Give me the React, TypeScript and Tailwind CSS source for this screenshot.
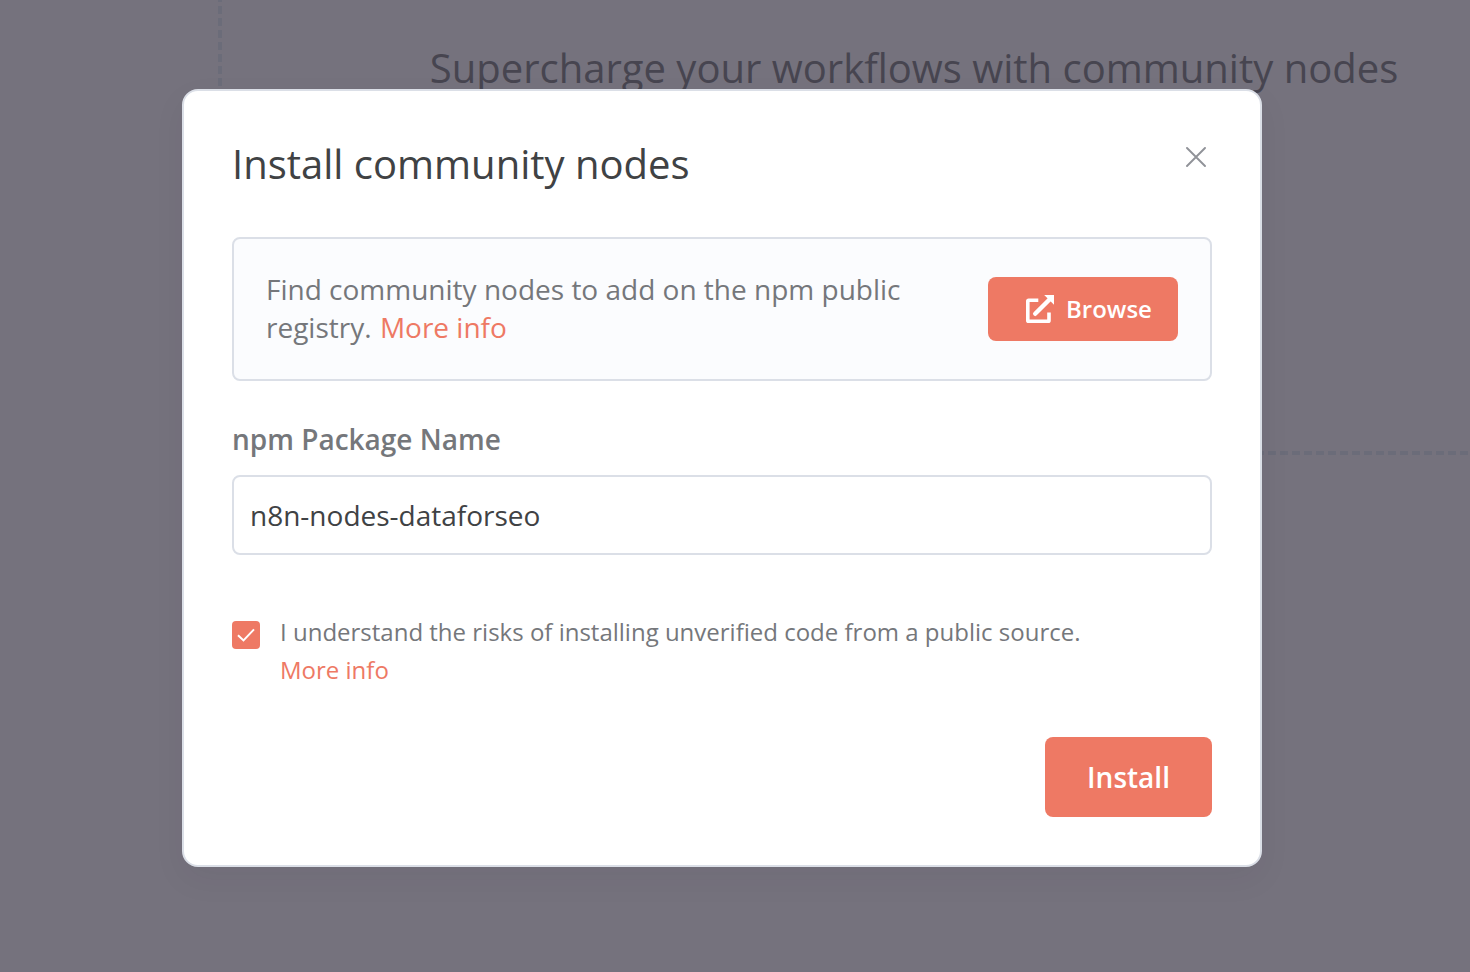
import { useState } from 'react';

function CloseIcon() {
  return (
    <svg className="h-5 w-5" viewBox="0 0 20 20" fill="none" stroke="#909298" strokeWidth="1.9" strokeLinecap="round">
      <path d="M1 1l18 18M19 1L1 19" />
    </svg>
  );
}

function ExternalLinkIcon() {
  return (
    <svg className="h-7 w-7" viewBox="0 0 28 28" fill="none" stroke="currentColor">
      <path d="M12.3 5.2H2.6Q1.8 5.2 1.8 6V25.4Q1.8 26.2 2.6 26.2H22.2Q23 26.2 23 25.4V17.5" strokeWidth="3.6" />
      <path d="M9.2 18.8L23.5 4.5" strokeWidth="4.4" strokeLinecap="round" />
      <path d="M18.2 0H28V9.8Z" fill="currentColor" stroke="none" />
    </svg>
  );
}

export default function App() {
  const [packageName, setPackageName] = useState('n8n-nodes-dataforseo');
  const [agreed, setAgreed] = useState(true);

  return (
    <div className="relative h-[972px] w-[1470px] overflow-hidden bg-[#75727d] font-['Open_Sans',sans-serif]">
      {/* dimmed page behind the modal */}
      <div className="flex h-[455px] pl-[218px]">
        <div className="w-1 shrink-0 bg-[linear-gradient(to_bottom,#6b6c79_0_2px,transparent_2px_6px,#6b6c79_6px_12px)] bg-[length:4px_12px]" />
        <div className="flex w-[1384px] shrink-0 flex-col items-center justify-between">
          <h2 className="pt-[41px] text-[40px] leading-[54px] whitespace-nowrap text-[#474550]">
            Supercharge your workflows with community nodes
          </h2>
          <div className="h-1 w-full bg-[linear-gradient(to_right,transparent_0_2px,#6b6c79_2px_10px,transparent_10px_12px)] bg-[length:12px_4px]" />
        </div>
      </div>

      <div className="absolute inset-0 flex items-start justify-center pt-[89px] pr-[26px]">
        <div className="flex h-[778px] w-[1080px] flex-col rounded-2xl border-2 border-[#dbdfe7] bg-white px-12 shadow-[0_12px_32px_rgba(50,40,50,0.06)]">
          <div className="flex items-start justify-between pt-[46px]">
            <h1 className="text-[40px] leading-[54px] text-[#404244]">Install community nodes</h1>
            <button className="mt-2.5 mr-1.5" aria-label="Close">
              <CloseIcon />
            </button>
          </div>

          <div className="mt-[46px] flex h-36 items-center justify-between rounded-lg border-2 border-[#dbdfe7] bg-[#fbfcfe] px-8">
            <p className="w-[660px] pb-0.5 text-[28px] leading-[38px] text-[#75777b]">
              Find community nodes to add on the npm public registry. <a className="ml-px text-[#ee7964]">More info</a>
            </p>
            <button className="flex h-16 w-[190px] items-center gap-3 rounded-lg bg-[#ee7964] pl-[38px] text-2xl font-semibold text-white">
              <ExternalLinkIcon />
              Browse
            </button>
          </div>

          <label className="mt-[39px] text-[28px] leading-[38px] font-semibold text-[#75777b]" htmlFor="package">
            npm Package Name
          </label>
          <input
            id="package"
            className="mt-[17px] h-20 shrink-0 rounded-lg border-2 border-[#dbdfe7] bg-white px-4 text-[28px] text-[#404244] outline-none"
            value={packageName}
            onChange={(e) => setPackageName(e.target.value)}
          />

          <div className="mt-[58px] flex gap-5 text-2xl leading-[38px] text-[#75777b]">
            <button
              className="mt-2 flex h-7 w-7 items-center justify-center rounded bg-[#ee7964]"
              role="checkbox"
              aria-checked={agreed}
              onClick={() => setAgreed(!agreed)}
            >
              {agreed && (
                <svg className="h-7 w-7" viewBox="0 0 28 28" fill="none" stroke="white" strokeWidth="2">
                  <path d="M6 14.2L11.5 19.4L22 8.4" />
                </svg>
              )}
            </button>
            <p>
              I understand the risks of installing unverified code from a public source.
              <br />
              <a className="text-[#ee7964]">More info</a>
            </p>
          </div>

          <button className="mt-12 h-20 w-[167px] self-end rounded-lg bg-[#ee7964] text-[28px] font-semibold text-white">
            Install
          </button>
        </div>
      </div>
    </div>
  );
}
